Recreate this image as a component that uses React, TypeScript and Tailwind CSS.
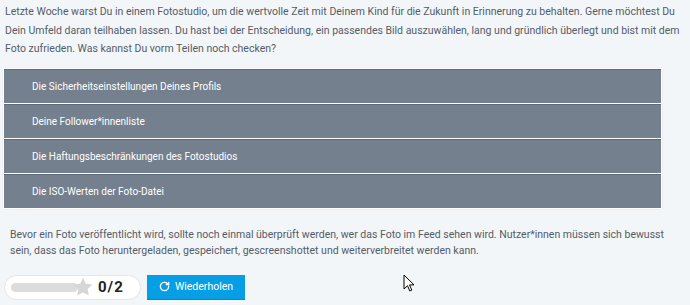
import { RotateCw } from "lucide-react";

const OPTIONS = [
  "Die Sicherheitseinstellungen Deines Profils",
  "Deine Follower*innenliste",
  "Die Haftungsbeschränkungen des Fotostudios",
  "Die ISO-Werten der Foto-Datei",
];

const Star = () => (
  <svg viewBox="0 0 24 24" className="w-[22px] h-[22px] -ml-[6px]" fill="#d6d6d6">
    <path d="M12 1.8l3.1 6.6 7.2.9-5.3 5 1.4 7.1L12 17.9l-6.4 3.5 1.4-7.1-5.3-5 7.2-.9z" />
  </svg>
);

const Cursor = () => (
  <svg viewBox="0 0 12 18" className="absolute left-[403px] top-[274px] w-[12px] h-[18px]">
    <path d="M1 1v14l3.5-3.3 2.3 5.3 2-.9-2.3-5.2H11z" fill="#fff" stroke="#000" strokeWidth="1" strokeLinejoin="round" />
  </svg>
);

const App = () => {
  return (
    <div
      className="relative w-[690px] h-[305px] bg-[#f3f6f9] text-[#535c67] overflow-hidden"
      style={{ fontFamily: 'Roboto, "Liberation Sans", sans-serif' }}
    >
      <div className="w-[680px] pl-[5px] pt-[3px]">
        <p className="text-[10.5px] leading-[18.5px] whitespace-nowrap">
          Letzte Woche warst Du in einem Fotostudio, um die wertvolle Zeit mit Deinem Kind für die Zukunft in
          Erinnerung zu behalten. Gerne möchtest Du
          <br />
          Dein Umfeld daran teilhaben lassen. Du hast bei der Entscheidung, ein passendes Bild auszuwählen, lang
          und gründlich überlegt und bist mit dem
          <br />
          Foto zufrieden. Was kannst Du vorm Teilen noch checken?
        </p>
      </div>

      <div className="ml-[3px] mt-[9px] w-[659px] border border-white bg-white flex flex-col gap-[1px] shadow-[0_0_1px_rgba(0,0,0,0.15)]">
        {OPTIONS.map((o) => (
          <div
            key={o}
            className="h-[34px] bg-[#75808e] border-t border-[#5f6a78] flex items-center pl-[28px] text-white text-[10px]"
          >
            {o}
          </div>
        ))}
      </div>

      <div className="w-[680px] pl-[10px] pt-[18px]">
        <p className="text-[10.5px] leading-[16px] whitespace-nowrap">
          Bevor ein Foto veröffentlicht wird, sollte noch einmal überprüft werden, wer das Foto im Feed sehen
          wird. Nutzer*innen müssen sich bewusst
          <br />
          sein, dass das Foto heruntergeladen, gespeichert, gescreenshottet und weiterverbreitet werden kann.
        </p>
      </div>

      <div className="flex items-center gap-[6px] pl-[4px] mt-[16px]">
        <div className="h-[25px] w-[137px] rounded-full bg-white border border-[#e4e7ea] flex items-center pl-[6px]">
          <div className="h-[9px] w-[67px] rounded-full bg-[#dcdcdc]" />
          <Star />
          <span className="ml-[4px] text-[15px] font-bold text-[#222] tracking-[1px]">0/2</span>
        </div>
        <button className="h-[25px] w-[98px] bg-[#069fe6] text-white text-[10.5px] flex items-center justify-center gap-[5px] border-b border-[#0588c6]">
          <RotateCw size={11} strokeWidth={3} />
          Wiederholen
        </button>
      </div>

      <Cursor />
    </div>
  );
};

export default App;
